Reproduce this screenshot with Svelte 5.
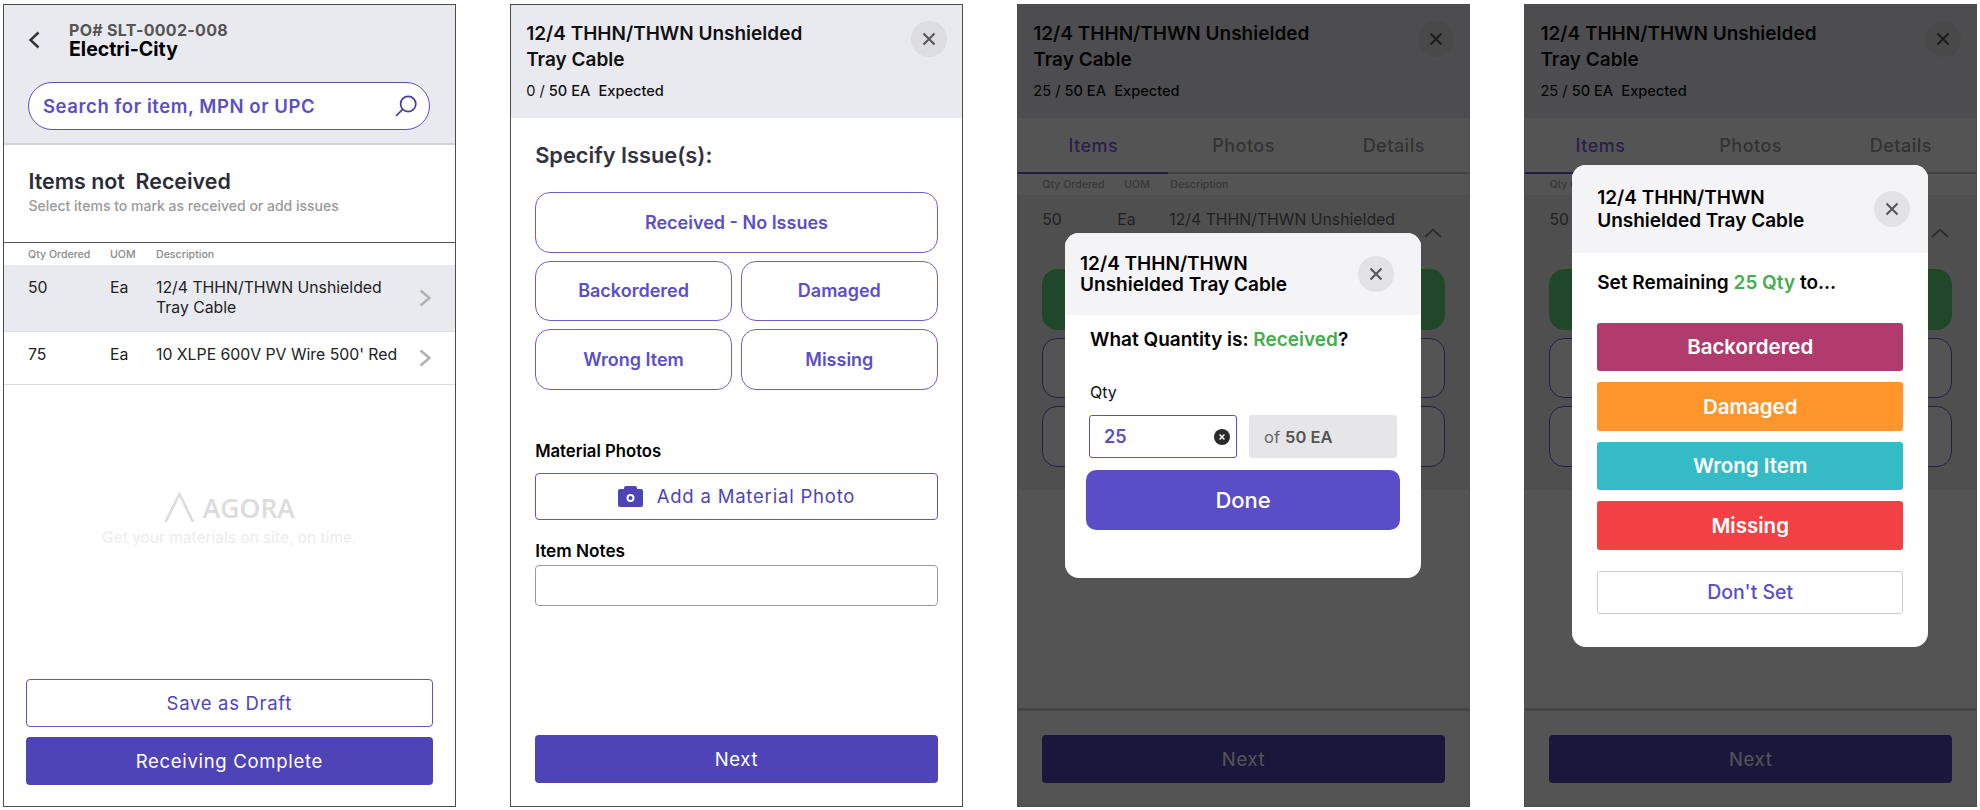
<script>
    const items = [
        { qty: "50", uom: "Ea", desc: "12/4 THHN/THWN Unshielded Tray Cable", tall: true },
        { qty: "75", uom: "Ea", desc: "10 XLPE 600V PV Wire 500' Red", tall: false },
    ];
    const issues = ["Backordered", "Damaged", "Wrong Item", "Missing"];
    const setOptions = [
        { label: "Backordered", color: "#b23b6e" },
        { label: "Damaged", color: "#ff962b" },
        { label: "Wrong Item", color: "#35bbc5" },
        { label: "Missing", color: "#f34145" },
    ];
    const tabs = ["Items", "Photos", "Details"];
</script>

{#snippet closeBtn()}
    <button class="close" aria-label="Close">
        <svg width="14" height="14" viewBox="0 0 14 14">
            <path d="M1.5 1.5l11 11M12.5 1.5l-11 11" />
        </svg>
    </button>
{/snippet}

{#snippet itemHead(received)}
    <header class="item-head">
        <div>
            <h2>12/4 THHN/THWN Unshielded<br />Tray Cable</h2>
            <p>{received} / <span>50 EA</span>&nbsp; <span>Expected</span></p>
        </div>
        {@render closeBtn()}
    </header>
{/snippet}

{#snippet issueGrid()}
    <div class="issue-grid">
        <button class="issue wide">Received - No Issues</button>
        {#each issues as issue}
            <button class="issue">{issue}</button>
        {/each}
    </div>
{/snippet}

<!-- the modal covers the labels of these buttons, so they have none -->
{#snippet dimGrid()}
    <div class="issue-grid filled">
        <div class="issue wide"></div>
        {#each issues as issue (issue)}
            <div class="issue"></div>
        {/each}
    </div>
{/snippet}

{#snippet dimBase()}
    {@render itemHead(25)}
    <nav class="tabs">
        {#each tabs as tab, i}
            <span class:active={i === 0}>{tab}</span>
        {/each}
    </nav>
    <div class="detail">
        <div class="detail-labels">
            <span>Qty Ordered</span>
            <span>UOM</span>
            <span>Description</span>
        </div>
        <div class="detail-row">
            <span>50</span>
            <span>Ea</span>
            <span>12/4 THHN/THWN Unshielded</span>
            <svg class="up" width="18" height="10" viewBox="0 0 18 10"><path d="M1 9l8-7.5L17 9" /></svg>
        </div>
        {@render dimGrid()}
    </div>
    <footer class="next-bar ruled">
        <button class="btn solid">Next</button>
    </footer>
{/snippet}

<main class="board">
    <section class="screen">
        <header class="po-head">
            <div class="po-top">
                <svg width="12" height="18" viewBox="0 0 12 18"><path d="M10.5 1.5L2.5 9l8 7.5" /></svg>
                <div>
                    <div class="po-num">PO# SLT-0002-008</div>
                    <div class="po-vendor">Electri-City</div>
                </div>
            </div>
            <div class="search">
                <span>Search for item, MPN or UPC</span>
                <svg width="22" height="22" viewBox="0 0 22 22">
                    <circle cx="13.2" cy="9" r="7.6" />
                    <path d="M7.6 14.4L1 21" />
                </svg>
            </div>
        </header>

        <div class="intro">
            <h1>Items not&nbsp; Received</h1>
            <p>Select items to mark as received or add issues</p>
        </div>

        <div class="list-labels">
            <span>Qty Ordered</span>
            <span>UOM</span>
            <span>Description</span>
        </div>
        {#each items as item}
            <div class="list-row" class:tall={item.tall}>
                <span>{item.qty}</span>
                <span>{item.uom}</span>
                <span class="desc">{item.desc}</span>
                <svg width="12" height="18" viewBox="0 0 12 18"><path d="M1.5 1.5L10.5 9l-9 7.5" /></svg>
            </div>
        {/each}

        <div class="brand">
            <div class="brand-logo">
                <svg width="31" height="31" viewBox="0 0 31 31"><path d="M1.5 30L15.5 2l13.5 28" /></svg>
                <span>AGORA</span>
            </div>
            <p>Get your materials on site, on time.</p>
        </div>

        <footer class="po-foot">
            <button class="btn outline">Save as Draft</button>
            <button class="btn solid">Receiving Complete</button>
        </footer>
    </section>

    <section class="screen">
        {@render itemHead(0)}
        <div class="issue-body">
            <h3>Specify Issue(s):</h3>
            {@render issueGrid()}
            <label class="photos-label" for="photo">Material Photos</label>
            <button id="photo" class="btn outline photo">
                <svg width="25" height="21" viewBox="0 0 25 21">
                    <path class="cam" d="M8 0h9a2 2 0 0 1 2 2v1h4a2 2 0 0 1 2 2v14a2 2 0 0 1-2 2H2a2 2 0 0 1-2-2V5a2 2 0 0 1 2-2h4V2a2 2 0 0 1 2-2z" />
                    <circle class="cam-ring" cx="12.5" cy="12" r="3" />
                </svg>
                Add a Material Photo
            </button>
            <label class="notes-label" for="notes">Item Notes</label>
            <input id="notes" class="notes" />
        </div>
        <footer class="next-bar">
            <button class="btn solid">Next</button>
        </footer>
    </section>

    <section class="screen">
        {@render dimBase()}
        <div class="overlay">
            <div class="modal qty">
                <header class="modal-head">
                    <h2>12/4 THHN/THWN<br />Unshielded Tray Cable</h2>
                    {@render closeBtn()}
                </header>
                <div class="modal-body">
                    <h4>What Quantity is: <em>Received</em>?</h4>
                    <div class="qty-label">Qty</div>
                    <div class="qty-fields">
                        <div class="qty-input">
                            <span>25</span>
                            <svg width="16" height="16" viewBox="0 0 16 16">
                                <circle cx="8" cy="8" r="8" />
                                <path d="M5.6 5.6l4.8 4.8M10.4 5.6l-4.8 4.8" />
                            </svg>
                        </div>
                        <div class="qty-of">of <b>50 EA</b></div>
                    </div>
                    <button class="done">Done</button>
                </div>
            </div>
        </div>
    </section>

    <section class="screen">
        {@render dimBase()}
        <div class="overlay">
            <div class="modal remaining">
                <header class="modal-head">
                    <h2>12/4 THHN/THWN<br />Unshielded Tray Cable</h2>
                    {@render closeBtn()}
                </header>
                <div class="modal-body">
                    <h4>Set Remaining <em>25 Qty</em> to...</h4>
                    <div class="set-list">
                        {#each setOptions as opt}
                            <button class="set-btn" style="background: {opt.color}">{opt.label}</button>
                        {/each}
                    </div>
                    <button class="dont-set">Don't Set</button>
                </div>
            </div>
        </div>
    </section>
</main>

<style>
    :global(body) {
        background: #fff;
        font-family: Inter, "Liberation Sans", sans-serif;
    }

    h1, h2, h3, h4, p {
        margin: 0;
    }

    button {
        font-family: inherit;
        cursor: pointer;
        padding: 0;
    }

    .board {
        display: flex;
        gap: 54.5px;
        width: 1980px;
        height: 810px;
        box-sizing: border-box;
        padding: 4px 3px 0;
        font-family: Inter, "Liberation Sans", sans-serif;
    }

    .screen {
        position: relative;
        display: flex;
        flex-direction: column;
        width: 453px;
        height: 803px;
        box-sizing: border-box;
        border: 1px solid #4c4c4c;
        overflow: hidden;
    }

    /* first screen */
    .po-head {
        height: 140px;
        box-sizing: border-box;
        background: #e9eaef;
        border-bottom: 2px solid #d2d3d7;
        padding: 15px 25px 0 24px;
    }

    .po-top {
        display: flex;
        align-items: center;
        gap: 29px;
    }

    .po-top path {
        fill: none;
        stroke: #333;
        stroke-width: 2.4;
    }

    .po-num {
        font-size: 16px;
        line-height: 20px;
        font-weight: 700;
        color: #555;
        letter-spacing: 0.3px;
    }

    .po-vendor {
        font-size: 19.5px;
        line-height: 19px;
        font-weight: 700;
        color: #000;
    }

    .search {
        display: flex;
        align-items: center;
        justify-content: space-between;
        height: 48px;
        box-sizing: border-box;
        margin-top: 23px;
        padding: 0 12px 0 14px;
        background: #fff;
        border: 1.5px solid #5a4fc8;
        border-radius: 24px;
        color: #5a4fc8;
        font-size: 18.5px;
        font-weight: 600;
        letter-spacing: 0.58px;
    }

    .search svg {
        fill: none;
        stroke: #453ba8;
        stroke-width: 1.7;
    }

    .intro {
        height: 97px;
        box-sizing: border-box;
        padding: 22px 25px 0 24.5px;
    }

    .intro h1 {
        font-size: 21.4px;
        line-height: 28px;
        font-weight: 600;
        color: #2b2b3a;
    }

    .intro p {
        margin-top: 1.5px;
        font-size: 14px;
        line-height: 18px;
        font-weight: 500;
        color: #999;
    }

    .list-labels,
    .detail-labels {
        display: grid;
        grid-template-columns: 82px 46px 1fr;
        align-items: center;
        font-size: 10.6px;
        color: #8a8a8a;
        font-weight: 500;
    }

    .list-labels {
        height: 23px;
        box-sizing: border-box;
        padding-left: 24px;
        border-top: 1px solid #555;
    }

    .list-row {
        display: grid;
        grid-template-columns: 82px 46px 1fr 20px;
        min-height: 53px;
        box-sizing: border-box;
        padding: 13px 24px 0;
        border-bottom: 1.5px solid #dcdcdf;
        font-size: 15.8px;
        line-height: 20px;
        color: #222;
    }

    .list-row.tall {
        min-height: 67px;
        background: #e9eaef;
    }

    .list-row .desc {
        max-width: 240px;
        white-space: normal;
    }

    .list-row:not(.tall) .desc {
        max-width: none;
        white-space: nowrap;
    }

    .list-row svg {
        align-self: center;
        justify-self: end;
        margin-top: -13px;
        fill: none;
        stroke: #b0b0b0;
        stroke-width: 2.4;
    }

    .brand {
        margin-top: 107px;
        text-align: center;
    }

    .brand-logo {
        display: flex;
        align-items: center;
        justify-content: center;
        gap: 8px;
        height: 31px;
        font-family: "Open Sans", sans-serif;
        font-size: 26.5px;
        font-weight: 600;
        color: #dcdcdc;
    }

    .brand-logo svg {
        fill: none;
        stroke: #dcdcdc;
        stroke-width: 2.6;
    }

    .brand p {
        margin-top: 5px;
        font-size: 15.5px;
        line-height: 20px;
        color: #ececec;
    }

    .po-foot {
        display: flex;
        flex-direction: column;
        gap: 10px;
        margin-top: auto;
        padding: 0 22px 21px;
    }

    .btn {
        width: 100%;
        height: 48px;
        border-radius: 4px;
        font-size: 18.5px;
        letter-spacing: 0.7px;
    }

    .btn.solid {
        background: #4f44b7;
        border: none;
        color: #fff;
    }

    .btn.outline {
        background: #fff;
        border: 1.5px solid #5f55cb;
        color: #4f44b7;
    }

    /* item header, used on three screens */
    .item-head {
        display: flex;
        justify-content: space-between;
        align-items: flex-start;
        height: 113px;
        box-sizing: border-box;
        flex: none;
        padding: 15.5px 15px 0;
        background: #e9eaef;
    }

    .item-head h2 {
        font-size: 19px;
        line-height: 26.5px;
        font-weight: 600;
        color: #111;
    }

    .item-head p {
        margin-top: 7.5px;
        font-size: 14.6px;
        line-height: 20px;
        color: #111;
    }

    .item-head p span {
        font-weight: 500;
    }

    .close {
        display: flex;
        align-items: center;
        justify-content: center;
        flex: none;
        width: 36px;
        height: 36px;
        border: none;
        border-radius: 50%;
        background: #dcdce1;
    }

    .close svg {
        fill: none;
        stroke: #555;
        stroke-width: 2;
    }

    /* issue screen */
    .issue-body {
        padding: 23px 24px 0;
    }

    .issue-body h3 {
        font-size: 21.8px;
        line-height: 28px;
        font-weight: 600;
        color: #33333f;
    }

    .issue-grid {
        display: grid;
        grid-template-columns: 1fr 1fr;
        grid-auto-rows: 60.5px;
        gap: 8px 9px;
        margin-top: 23px;
    }

    .issue {
        background: #fff;
        border: 1.5px solid #6a60d0;
        border-radius: 15px;
        color: #5a4fc8;
        font-size: 18px;
        font-weight: 600;
    }

    .issue.wide {
        grid-column: 1 / 3;
    }

    .filled .issue.wide {
        background: #62d67f;
        border-color: #62d67f;
    }

    .photos-label,
    .notes-label {
        display: block;
        font-size: 16.7px;
        line-height: 20px;
        font-weight: 600;
        color: #000;
    }

    .photos-label {
        margin-top: 51px;
    }

    .btn.photo {
        display: flex;
        align-items: center;
        justify-content: center;
        gap: 14px;
        height: 47px;
        margin-top: 12px;
        letter-spacing: 0.8px;
    }

    .cam {
        fill: #4f44b7;
    }

    .cam-ring {
        fill: #4f44b7;
        stroke: #fff;
        stroke-width: 2;
    }

    .notes-label {
        margin-top: 21px;
        font-size: 17.2px;
    }

    .notes {
        display: block;
        width: 100%;
        height: 41.5px;
        box-sizing: border-box;
        margin-top: 4px;
        border: 1.5px solid #999;
        border-radius: 4px;
    }

    .next-bar {
        margin-top: auto;
        padding: 0 24px 23px;
    }

    .next-bar.ruled {
        padding-top: 24px;
        border-top: 3px solid #d4d4d4;
    }

    /* dimmed screens */
    .tabs {
        position: relative;
        display: grid;
        grid-template-columns: repeat(3, 1fr);
        align-items: center;
        justify-items: center;
        flex: none;
        height: 56px;
        box-sizing: border-box;
        border-bottom: 2px solid #c4c4c4;
        font-size: 18px;
        font-weight: 500;
        letter-spacing: 0.5px;
        color: #9c9c9c;
    }

    .tabs::after {
        content: "";
        position: absolute;
        left: 0;
        bottom: -2px;
        width: 33.33%;
        height: 2px;
        background: #6f50d8;
    }

    .tabs span.active {
        color: #7f5fe8;
    }

    .detail {
        flex: none;
        height: 316px;
        box-sizing: border-box;
        background: #f0f0f3;
    }

    .detail-labels {
        height: 21px;
        padding-left: 24px;
        background: #fff;
        color: #aaa;
    }

    .detail-row {
        display: grid;
        grid-template-columns: 75px 52px 1fr 18px;
        height: 74px;
        box-sizing: border-box;
        padding: 15px 27px 0 24px;
        font-size: 15.8px;
        line-height: 20px;
        color: #666;
    }

    .up {
        margin-top: 18px;
        fill: none;
        stroke: #888;
        stroke-width: 2;
    }

    .detail .issue-grid {
        margin: 0;
        padding: 0 24px;
    }

    .overlay {
        position: absolute;
        inset: 0;
        display: flex;
        align-items: center;
        justify-content: center;
        padding-right: 1px;
        background: rgba(0, 0, 0, 0.67);
    }

    .modal {
        width: 356px;
        background: #fff;
        border-radius: 14px;
        overflow: hidden;
    }

    .modal.qty {
        height: 345px;
    }

    .modal.remaining {
        height: 482px;
    }

    .modal-head {
        display: flex;
        align-items: center;
        justify-content: space-between;
        background: #f4f4f7;
    }

    .qty .modal-head {
        height: 82px;
        padding: 0 27px 0 15px;
    }

    .remaining .modal-head {
        height: 88px;
        padding: 0 18px 0 25px;
    }

    .modal-head h2 {
        font-size: 19px;
        line-height: 21.5px;
        font-weight: 600;
        color: #000;
    }

    .remaining .modal-head h2 {
        line-height: 23px;
    }

    .modal-head .close {
        background: #e3e3e7;
    }

    .modal h4 {
        font-size: 19px;
        line-height: 24px;
        font-weight: 600;
        color: #000;
    }

    .modal h4 em {
        font-style: normal;
        color: #46ad4f;
    }

    .qty .modal-body {
        padding: 13px 21px 0;
    }

    .qty h4 {
        padding-left: 4px;
    }

    .qty-label {
        margin-top: 30px;
        padding-left: 4px;
        font-size: 16px;
        line-height: 20px;
        color: #111;
    }

    .qty-fields {
        display: grid;
        grid-template-columns: 148px 148px;
        gap: 12px;
        margin-top: 13px;
        padding-left: 3px;
    }

    .qty-input {
        display: flex;
        align-items: center;
        justify-content: space-between;
        height: 43px;
        box-sizing: border-box;
        padding: 0 6px 0 14px;
        border: 1.5px solid #5a4fc8;
        border-radius: 3px;
        color: #5a4fc8;
        font-size: 18px;
        font-weight: 600;
    }

    .qty-input circle {
        fill: #2a2a2a;
    }

    .qty-input path {
        fill: none;
        stroke: #fff;
        stroke-width: 1.4;
    }

    .qty-of {
        display: flex;
        align-items: center;
        gap: 5px;
        height: 43px;
        padding-left: 15px;
        background: #e6e6e8;
        border-radius: 3px;
        color: #666;
        font-size: 16.5px;
    }

    .qty-of b {
        color: #555;
        font-weight: 600;
    }

    .done {
        width: 314px;
        height: 60px;
        margin-top: 12px;
        background: #5a4ec6;
        border: none;
        border-radius: 10px;
        color: #fff;
        font-size: 22px;
        font-weight: 500;
    }

    .remaining .modal-body {
        padding: 18px 25px 0;
    }

    .set-list {
        display: flex;
        flex-direction: column;
        gap: 11px;
        margin-top: 28px;
    }

    .set-btn {
        height: 48.5px;
        border: none;
        border-radius: 3px;
        color: #fff;
        font-size: 20.5px;
        font-weight: 600;
    }

    .dont-set {
        display: block;
        width: 100%;
        height: 43px;
        margin-top: 21px;
        background: #fff;
        border: 1.5px solid #ccc;
        border-radius: 3px;
        color: #5a4fc8;
        font-size: 19.5px;
        font-weight: 500;
    }
</style>
